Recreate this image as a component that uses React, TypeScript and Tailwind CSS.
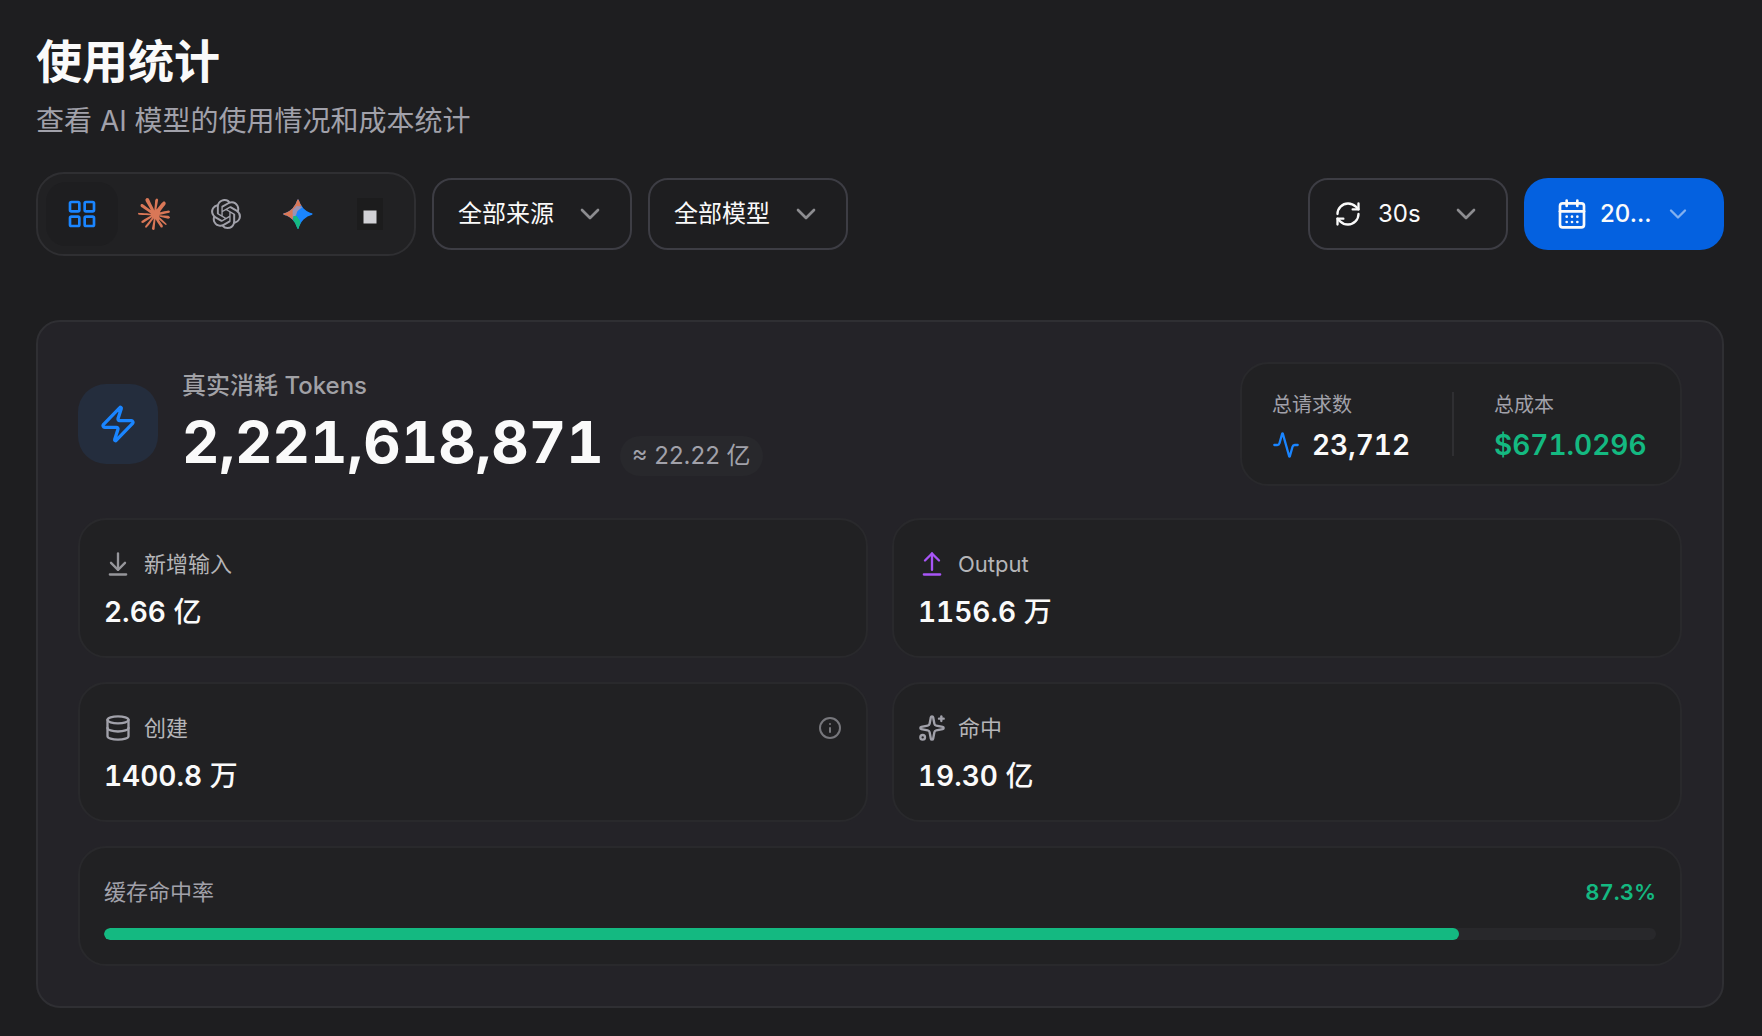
import React, { useState } from 'react';
import {
  Activity,
  ArrowDownToLine,
  ArrowUpFromLine,
  CalendarDays,
  ChevronDown,
  Database,
  Info,
  LayoutGrid,
  RefreshCw,
  Sparkles,
  Zap,
} from 'lucide-react';
import { SiClaude, SiOpenai } from 'react-icons/si';

const HIT_RATE = 87.3;

const GeminiIcon: React.FC = () => (
  <svg width="32" height="32" viewBox="0 0 24 24" aria-hidden="true">
    <defs>
      <clipPath id="gemini-star">
        <path d="M20.616 10.835a14.147 14.147 0 01-4.45-3.001 14.111 14.111 0 01-3.678-6.452.503.503 0 00-.975 0 14.134 14.134 0 01-3.679 6.452 14.155 14.155 0 01-4.45 3.001c-.65.28-1.318.505-2.002.678a.502.502 0 000 .975c.684.172 1.35.397 2.002.677a14.147 14.147 0 014.45 3.001 14.112 14.112 0 013.679 6.453.502.502 0 00.975 0c.172-.685.397-1.351.677-2.003a14.145 14.145 0 013.001-4.45 14.113 14.113 0 016.453-3.678.503.503 0 000-.975 13.245 13.245 0 01-2.003-.678z" />
      </clipPath>
      <filter id="gemini-blur" x="-50%" y="-50%" width="200%" height="200%">
        <feGaussianBlur stdDeviation="0.5" />
      </filter>
    </defs>
    <g clipPath="url(#gemini-star)">
      <rect width="24" height="24" fill="#1a85ff" />
      <g filter="url(#gemini-blur)">
        <path d="M-2 -2H17L15 5.5 10.5 8 8.5 12 8 17H-2Z" fill="#d97757" />
        <path d="M8 9 11 6 15.5 6.5 11.5 10 10.5 13 8 15Z" fill="#9a93b4" />
        <path d="M8.5 13.5 11 13.5 13.5 17 15 26H8Z" fill="#14b981" />
      </g>
    </g>
  </svg>
);

const OpenCodeIcon: React.FC = () => (
  <svg width="26" height="32" viewBox="0 0 26 32" aria-hidden="true">
    <rect width="26" height="32" fill="#1c1c1d" />
    <rect x="6.5" y="12.5" width="13" height="13" fill="#d1d1d6" />
  </svg>
);

const apps = [
  { id: 'all', label: '全部', icon: <LayoutGrid size={32} className="text-[#1a85ff]" /> },
  { id: 'claude', label: 'Claude', icon: <SiClaude size={32} className="text-[#d97757]" /> },
  { id: 'codex', label: 'Codex', icon: <SiOpenai size={30} className="text-[#a1a1aa]" /> },
  { id: 'gemini', label: 'Gemini', icon: <GeminiIcon /> },
  { id: 'opencode', label: 'OpenCode', icon: <OpenCodeIcon /> },
];

interface FilterSelectProps {
  label: string;
  options: string[];
  icon?: React.ReactNode;
}

const FilterSelect: React.FC<FilterSelectProps> = ({ label, options, icon }) => (
  <div className="relative flex h-18 w-50 items-center">
    {icon && <span className="pointer-events-none absolute left-[26px]">{icon}</span>}
    <select
      aria-label={label}
      className={`h-full w-full appearance-none rounded-[20px] border-2 border-[#3d3d44] bg-transparent text-2xl text-[#fafafa] ${
        icon ? 'pl-[68px]' : 'pl-6'
      }`}
    >
      {options.map((option) => (
        <option key={option}>{option}</option>
      ))}
    </select>
    <ChevronDown size={32} className="pointer-events-none absolute right-[26px] text-[#8c8c8f]" />
  </div>
);

interface StatTileProps {
  icon: React.ReactNode;
  label: string;
  value: string;
  unit: string;
  hint?: string;
}

const StatTile: React.FC<StatTileProps> = ({ icon, label, value, unit, hint }) => (
  <div className="space-y-2 rounded-[28px] border-2 border-[#29292c] bg-[#212123] p-6">
    <div className="flex h-10 items-center gap-3">
      {icon}
      <span className="text-[22px] text-[#b5b5b8]">{label}</span>
      {hint && (
        <button type="button" aria-label={hint} className="ml-auto">
          <Info size={24} className="text-[#77777c]" />
        </button>
      )}
    </div>
    <p className="text-[28px] leading-10 font-semibold text-[#fafafa] tabular-nums">
      {value} <span className="font-medium">{unit}</span>
    </p>
  </div>
);

const App: React.FC = () => {
  const [activeApp, setActiveApp] = useState('all');

  return (
    <div className="min-h-screen bg-[#1e1e20] pt-[33px] pr-[38px] pb-7 pl-9 font-[Inter,'Noto_Sans_CJK_SC',sans-serif] text-[#fafafa]">
      <header>
        <h1 className="text-[46px] leading-14 font-bold">使用统计</h1>
        <p className="mt-4 text-[28px] leading-8 text-[#a1a1aa]">
          查看 AI 模型的使用情况和成本统计
        </p>
      </header>

      <div className="mt-[35px] flex items-center gap-4">
        <div className="flex rounded-[28px] border-2 border-[#2f2f32] bg-[#212123] p-2">
          {apps.map((app) => (
            <button
              key={app.id}
              type="button"
              aria-label={app.label}
              aria-pressed={activeApp === app.id}
              onClick={() => setActiveApp(app.id)}
              className={`flex h-16 w-18 items-center justify-center rounded-[20px] ${
                activeApp === app.id ? 'bg-[#1e1e20]' : ''
              }`}
            >
              {app.icon}
            </button>
          ))}
        </div>
        <FilterSelect label="来源" options={['全部来源']} />
        <FilterSelect label="模型" options={['全部模型']} />

        <div className="ml-auto flex gap-4">
          <FilterSelect label="刷新间隔" options={['30s']} icon={<RefreshCw size={28} />} />
          <button
            type="button"
            className="flex h-18 w-50 items-center gap-3 rounded-3xl bg-[#0461e0] px-8 text-2xl font-medium"
          >
            <CalendarDays size={32} />
            <span>20...</span>
            <ChevronDown size={28} className="ml-auto text-[#82b0ef]" />
          </button>
        </div>
      </div>

      <section className="mt-16 rounded-3xl border-2 border-[#2f2f33] bg-[#242328] p-10">
        <div className="flex items-center justify-between">
          <div className="flex items-center gap-6">
            <div className="flex size-20 items-center justify-center rounded-[28px] bg-[#242d3d]">
              <Zap size={40} className="text-[#1a85ff]" />
            </div>
            <div>
              <p className="text-2xl leading-8 font-medium text-[#a1a1a6]">真实消耗 Tokens</p>
              <div className="mt-1 flex items-end gap-4">
                <span className="text-[58px] leading-18 font-bold tabular-nums">2,221,618,871</span>
                <span className="mb-0.5 rounded-full bg-[#28282c] px-3 text-2xl leading-10 text-[#a1a1aa]">
                  ≈ 22.22 亿
                </span>
              </div>
            </div>
          </div>

          <div className="flex items-center gap-10 rounded-[28px] border-2 border-[#29292c] bg-[#212123] px-[30px] py-5">
            <div className="min-w-35">
              <p className="text-xl leading-[42px] text-[#a1a1aa]">总请求数</p>
              <p className="flex items-center gap-3 text-[28px] leading-[38px] font-semibold tabular-nums">
                <Activity size={28} className="text-[#1a85ff]" />
                23,712
              </p>
            </div>
            <div className="h-16 w-0.5 bg-[#2f2f32]" />
            <div className="min-w-39">
              <p className="text-xl leading-[42px] text-[#a1a1aa]">总成本</p>
              <p className="text-[28px] leading-[38px] font-semibold text-[#14b981] tabular-nums">
                $671.0296
              </p>
            </div>
          </div>
        </div>

        <div className="mt-8 grid grid-cols-2 gap-6">
          <StatTile
            icon={<ArrowDownToLine size={28} className="text-[#96969b]" />}
            label="新增输入"
            value="2.66"
            unit="亿"
          />
          <StatTile
            icon={<ArrowUpFromLine size={28} className="text-[#a855f7]" />}
            label="Output"
            value="1156.6"
            unit="万"
          />
          <StatTile
            icon={<Database size={28} className="text-[#a1a1aa]" />}
            label="创建"
            value="1400.8"
            unit="万"
            hint="创建说明"
          />
          <StatTile
            icon={<Sparkles size={28} className="text-[#a1a1aa]" />}
            label="命中"
            value="19.30"
            unit="亿"
          />
        </div>

        <div className="mt-6 rounded-[28px] border-2 border-[#29292c] bg-[#212123] p-6">
          <div className="flex items-center justify-between text-[22px] leading-10">
            <span id="hit-rate" className="text-[#a1a1aa]">
              缓存命中率
            </span>
            <span className="font-semibold text-[#14b981] tabular-nums">{HIT_RATE}%</span>
          </div>
          <div
            role="progressbar"
            aria-labelledby="hit-rate"
            aria-valuenow={HIT_RATE}
            className="mt-4 h-3 overflow-hidden rounded-full bg-[#28282b]"
          >
            <div className="h-full rounded-full bg-[#14b981]" style={{ width: `${HIT_RATE}%` }} />
          </div>
        </div>
      </section>
    </div>
  );
};

export default App;
